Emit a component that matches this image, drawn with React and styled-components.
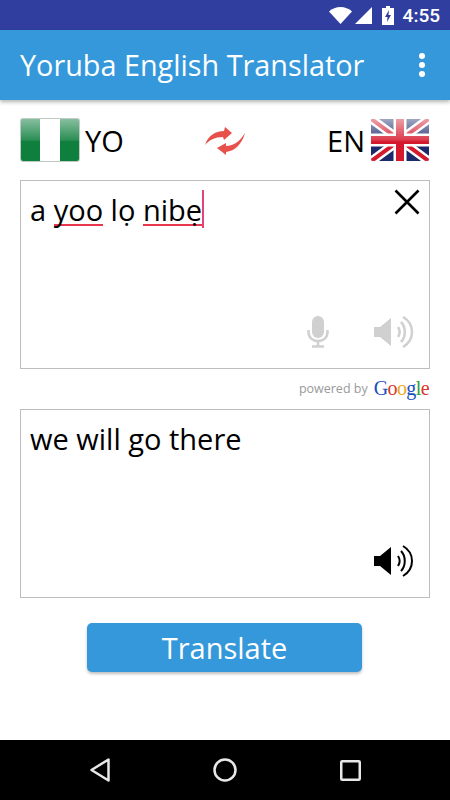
import React from "react";
import styled, { createGlobalStyle } from "styled-components";

const GlobalStyle = createGlobalStyle`
  html, body {
    margin: 0;
    padding: 0;
    background: #fff;
    font-family: "Open Sans", sans-serif;
  }
`;

const Screen = styled.div`
  width: 450px;
  height: 800px;
  display: flex;
  flex-direction: column;
  overflow: hidden;
  background: #fff;
`;

const StatusBar = styled.div`
  height: 30px;
  flex: none;
  background: #303f9f;
  display: flex;
  align-items: center;
  justify-content: flex-end;
  padding-right: 10px;
  color: #fff;
`;

const Clock = styled.span`
  font-family: Roboto, sans-serif;
  font-size: 19px;
  font-weight: 500;
  margin-left: 9px;
`;

const AppBar = styled.div`
  height: 70px;
  flex: none;
  background: #3498db;
  box-shadow: 0 2px 4px rgba(0, 0, 0, 0.3);
  display: flex;
  align-items: center;
  justify-content: space-between;
  padding: 0 25px 0 20px;
  position: relative;
`;

const Title = styled.div`
  color: #fff;
  font-size: 28.8px;
  line-height: 70px;
`;

const Dots = styled.div`
  display: flex;
  flex-direction: column;
  gap: 3px;
  span {
    width: 6px;
    height: 6px;
    border-radius: 50%;
    background: #fff;
  }
`;

const Content = styled.div`
  flex: 1;
  display: flex;
  flex-direction: column;
  padding: 18px 20px 0;
`;

const LangRow = styled.div`
  height: 44px;
  display: flex;
  align-items: center;
  justify-content: space-between;
  margin-bottom: 18px;
`;

const Lang = styled.div`
  display: flex;
  align-items: center;
  gap: 5px;
  width: 125px;
  justify-content: ${props => (props.end ? "flex-end" : "flex-start")};
`;

const LangCode = styled.span`
  font-size: 29px;
  color: #000;
  line-height: 44px;
  margin-top: 2px;
`;

const TextBox = styled.div`
  height: 189px;
  box-sizing: border-box;
  border: 1.5px solid #bdbdbd;
  padding: 8px 9px;
  display: flex;
  flex-direction: column;
  justify-content: space-between;
`;

const BoxTop = styled.div`
  display: flex;
  justify-content: space-between;
  align-items: flex-start;
`;

const BoxText = styled.div`
  font-size: 29px;
  line-height: 42px;
  color: #000;
  white-space: nowrap;
`;

const Misspelled = styled.span`
  border-bottom: 2px solid #e8374f;
  display: inline-block;
  line-height: 29px;
`;

const Caret = styled.span`
  display: inline-block;
  width: 2px;
  height: 38px;
  background: #e0447a;
  vertical-align: -7px;
`;

const BoxIcons = styled.div`
  display: flex;
  justify-content: flex-end;
  align-items: center;
  gap: 45px;
  padding-right: 6px;
  margin-bottom: 12px;
`;

const Powered = styled.div`
  height: 38px;
  padding: 0 1px 2px 0;
  display: flex;
  align-items: center;
  justify-content: flex-end;
  gap: 6px;
`;

const PoweredText = styled.span`
  color: #9a9a9a;
  font-size: 12.5px;
`;

const GoogleWord = styled.span`
  font-family: "Liberation Serif", serif;
  font-size: 20px;
  letter-spacing: -0.6px;
  line-height: 24px;
`;

const Letter = styled.span`
  color: ${props => props.color};
`;

const ButtonRow = styled.div`
  display: flex;
  justify-content: center;
  margin: 25px 1px 0 0;
`;

const TranslateButton = styled.button`
  width: 275px;
  height: 49px;
  border: none;
  border-radius: 5px;
  background: #3498db;
  color: #fff;
  font-family: "Open Sans", sans-serif;
  font-size: 29px;
  padding: 0;
  box-shadow: 0 2px 3px rgba(0, 0, 0, 0.25);
`;

const NavBar = styled.div`
  height: 60px;
  flex: none;
  background: #000;
  display: flex;
  align-items: center;
  justify-content: center;
  gap: 103px;
`;

const Nigeria = () => (
  <svg width="60" height="44" viewBox="0 0 60 44">
    <defs>
      <linearGradient id="shine" x1="0" y1="0" x2="0" y2="1">
        <stop offset="0" stopColor="#fff" stopOpacity="0.5" />
        <stop offset="0.5" stopColor="#fff" stopOpacity="0.12" />
        <stop offset="0.54" stopColor="#fff" stopOpacity="0" />
      </linearGradient>
    </defs>
    <rect x="1" y="1" width="58" height="42" rx="2" fill="#0f7f3e" />
    <rect x="20" y="1" width="20" height="42" fill="#fff" />
    <rect x="1" y="1" width="58" height="42" rx="2" fill="url(#shine)" />
    <rect x="0.5" y="0.5" width="59" height="43" rx="2" fill="none" stroke="#9aa69e" strokeOpacity="0.6" />
  </svg>
);

const UnionJack = () => (
  <svg width="60" height="44" viewBox="0 0 60 44">
    <defs>
      <linearGradient id="shine2" x1="0" y1="0" x2="0" y2="1">
        <stop offset="0" stopColor="#fff" stopOpacity="0.6" />
        <stop offset="0.5" stopColor="#fff" stopOpacity="0.15" />
        <stop offset="0.54" stopColor="#fff" stopOpacity="0" />
      </linearGradient>
      <clipPath id="flagClip">
        <rect x="1" y="1" width="58" height="42" rx="2" />
      </clipPath>
    </defs>
    <g clipPath="url(#flagClip)">
      <rect width="60" height="44" fill="#1c2a6b" />
      <path d="M0 0L60 44M60 0L0 44" stroke="#fff" strokeWidth="9" />
      <path d="M0 0L60 44M60 0L0 44" stroke="#d5192d" strokeWidth="4" />
      <path d="M30 0V44M0 22H60" stroke="#fff" strokeWidth="13" />
      <path d="M30 0V44M0 22H60" stroke="#d5192d" strokeWidth="8" />
      <rect width="60" height="44" fill="url(#shine2)" />
    </g>
  </svg>
);

const SwapIcon = () => (
  <svg width="42" height="32" viewBox="0 0 42 32">
    <path d="M1 21C4 12 11 7 20 7L21 3L28 9L20 16L19 13C11 13 5 16 1 21Z" fill="#e8504a" />
    <path d="M41 9C38 20 31 27 22 28L22 31L13 24L22 19L22 22C30 22 36 17 41 9Z" fill="#e8504a" />
  </svg>
);

const CloseIcon = () => (
  <svg width="26" height="26" viewBox="0 0 26 26">
    <path d="M1.500 1.500L24.500 24.500M24.500 1.500L1.500 24.500" stroke="#000" strokeWidth="2.600" />
  </svg>
);

const MicIcon = () => (
  <svg width="22" height="32" viewBox="0 0 22 32" fill="none">
    <rect x="5" y="0" width="12" height="22" rx="6" fill="#d0d0d0" />
    <path d="M1.500 14V16C1.500 21.500 5.500 25 11 25C16.500 25 20.500 21.500 20.500 16V14" stroke="#d0d0d0" strokeWidth="2.500" />
    <path d="M11 25V30M5 30.500H17" stroke="#d0d0d0" strokeWidth="2.500" />
  </svg>
);

const SpeakerIcon = ({ color, thin }) => (
  <svg width="40" height="32" viewBox="0 0 40 32" fill="none">
    <path d="M0 11H6L17 2V30L6 21H0Z" fill={color} />
    <path d="M24 11C26 14 26 18 24 21" stroke={color} strokeWidth={thin ? 2 : 2.500} />
    <path d="M27 6C32 11 32 21 27 26" stroke={color} strokeWidth={thin ? 2 : 2.500} />
    <path d="M29 1C41 8 41 24 29 31" stroke={color} strokeWidth={thin ? 2 : 2.500} />
  </svg>
);

const App = () => (
  <Screen>
    <GlobalStyle />
    <StatusBar>
      <svg width="23" height="17" viewBox="0 0 23 17">
        <path d="M0 4.500C6 -1.500 17 -1.500 23 4.500L11.500 17Z" fill="#fff" />
      </svg>
      <svg width="17" height="17" viewBox="0 0 17 17" style={{ marginLeft: 3 }}>
        <path d="M17 0V17H0Z" fill="#fff" />
      </svg>
      <svg width="12" height="19" viewBox="0 0 12 19" style={{ marginLeft: 10 }}>
        <path d="M4 0H8V2H12V19H0V2H4Z" fill="#fff" />
        <path d="M7 4L3 11H5.500L5 16L9 9H6.500Z" fill="#303f9f" />
      </svg>
      <Clock>4:55</Clock>
    </StatusBar>
    <AppBar>
      <Title>Yoruba English Translator</Title>
      <Dots>
        <span />
        <span />
        <span />
      </Dots>
    </AppBar>
    <Content>
      <LangRow>
        <Lang>
          <Nigeria />
          <LangCode>YO</LangCode>
        </Lang>
        <SwapIcon />
        <Lang end="true">
          <LangCode>EN</LangCode>
          <UnionJack />
        </Lang>
      </LangRow>
      <TextBox>
        <BoxTop>
          <BoxText>
            a <Misspelled>yoo</Misspelled> lọ <Misspelled>nibẹ</Misspelled>
            <Caret />
          </BoxText>
          <CloseIcon />
        </BoxTop>
        <BoxIcons>
          <MicIcon />
          <SpeakerIcon color="#d0d0d0" />
        </BoxIcons>
      </TextBox>
      <Powered>
        <PoweredText>powered by</PoweredText>
        <GoogleWord>
          <Letter color="#1a4fc0">G</Letter>
          <Letter color="#d8382c">o</Letter>
          <Letter color="#e8a91c">o</Letter>
          <Letter color="#1a4fc0">g</Letter>
          <Letter color="#2f9a3e">l</Letter>
          <Letter color="#d8382c">e</Letter>
        </GoogleWord>
      </Powered>
      <TextBox>
        <BoxTop>
          <BoxText>we will go there</BoxText>
        </BoxTop>
        <BoxIcons>
          <SpeakerIcon color="#000" thin />
        </BoxIcons>
      </TextBox>
      <ButtonRow>
        <TranslateButton>Translate</TranslateButton>
      </ButtonRow>
    </Content>
    <NavBar>
      <svg width="20" height="24" viewBox="0 0 20 24" fill="none">
        <path d="M18.500 1.500V22.500L1.500 12Z" stroke="#e8e8e8" strokeWidth="2.500" strokeLinejoin="round" />
      </svg>
      <svg width="24" height="24" viewBox="0 0 24 24" fill="none">
        <circle cx="12" cy="12" r="10.500" stroke="#e8e8e8" strokeWidth="2.500" />
      </svg>
      <svg width="21" height="21" viewBox="0 0 21 21" fill="none">
        <rect x="1.250" y="1.250" width="18.500" height="18.500" rx="1" stroke="#e8e8e8" strokeWidth="2.500" />
      </svg>
    </NavBar>
  </Screen>
);

export default App;
